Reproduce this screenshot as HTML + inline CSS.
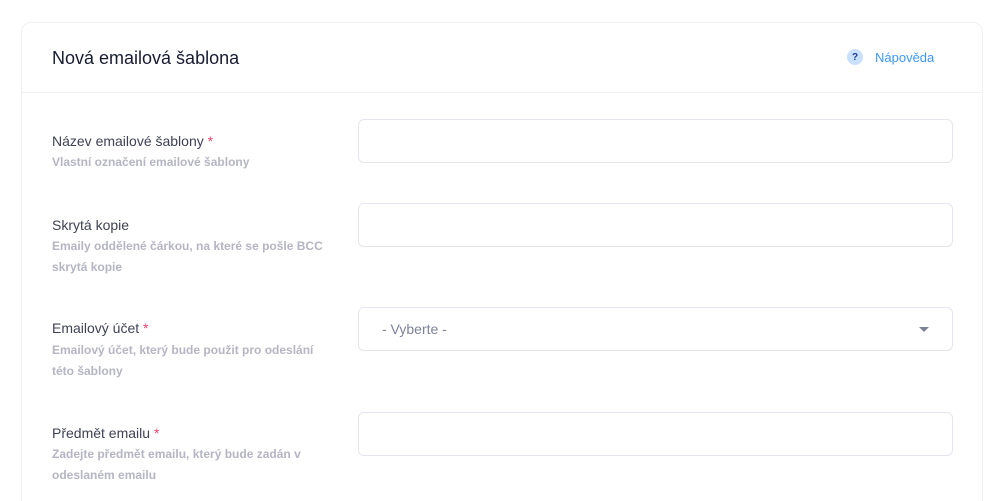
<!DOCTYPE html><html><head><style>
html,body{margin:0;background:#fff;font-family:"Liberation Sans",sans-serif;width:1006px;height:501px;overflow:hidden;position:relative}
.card{position:absolute;left:21px;top:22px;width:960px;height:500px;border:1px solid #eff0f4;border-radius:10px;background:#fff}
.hdr{height:69px;border-bottom:1px solid #eff0f4;position:relative}
.t{position:absolute;left:30px;top:25px;font-size:18px;color:#181c32;font-weight:500}
.help{position:absolute;left:825px;top:26px;font-size:13px;color:#3e97ff;display:flex;align-items:center}
.help .i{width:16px;height:16px;border-radius:50%;background:#c9e0ff;color:#1e3a8a;font-size:10px;font-weight:bold;display:flex;align-items:center;justify-content:center;margin-right:12px}
.l{position:absolute;left:30px;font-size:14px;color:#3f4254;font-weight:500}
.l span{color:#f1416c}
.h{position:absolute;left:30px;font-size:12px;color:#b5b5c3;font-weight:bold;line-height:21px;width:278px}
.in{position:absolute;left:336px;width:595px;height:44px;box-sizing:border-box;border:1px solid #e4e6ef;border-radius:6px}
.sel{font-size:14px;color:#7e8299;line-height:42px;padding-left:23px}
.sel:after{content:"";position:absolute;right:23px;top:19px;border:5px solid transparent;border-top:5px solid #7e8299}
</style></head><body><div class="card">
<div class="hdr"><div class="t">Nová emailová šablona</div><div class="help"><div class="i">?</div>Nápověda</div></div>
<div class="l" style="top:110px">Název emailové šablony <span>*</span></div>
<div class="h" style="top:129px">Vlastní označení emailové šablony</div>
<div class="in" style="top:96px"></div>
<div class="l" style="top:194px">Skrytá kopie</div>
<div class="h" style="top:213px">Emaily oddělené čárkou, na které se pošle BCC skrytá kopie</div>
<div class="in" style="top:180px"></div>
<div class="l" style="top:297px">Emailový účet <span>*</span></div>
<div class="h" style="top:317px">Emailový účet, který bude použit pro odeslání této šablony</div>
<div class="in sel" style="top:284px">- Vyberte -</div>
<div class="l" style="top:402px">Předmět emailu <span>*</span></div>
<div class="h" style="top:421px">Zadejte předmět emailu, který bude zadán v odeslaném emailu</div>
<div class="in" style="top:389px"></div>
</div></body></html>
